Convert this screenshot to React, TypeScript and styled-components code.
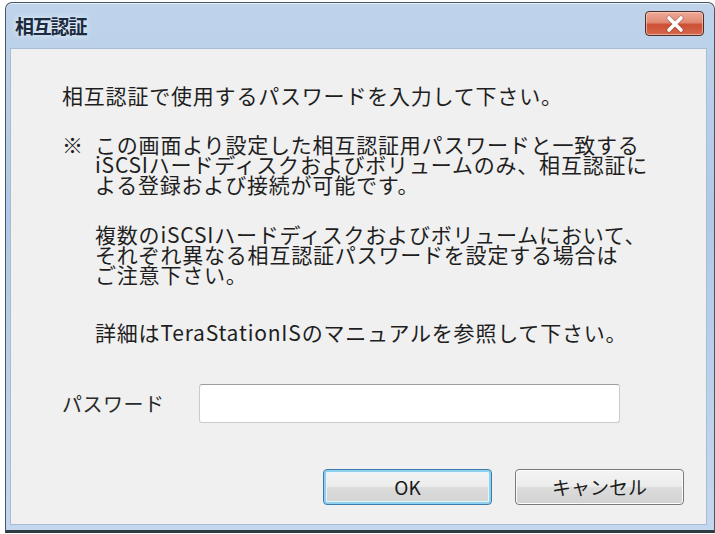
import React from "react";
import styled, { createGlobalStyle } from "styled-components";

const FONT = `"Noto Sans CJK JP", "Noto Sans", sans-serif`;

const GlobalStyle = createGlobalStyle`
  html, body {
    margin: 0;
    padding: 0;
    background: #ffffff;
  }
  * {
    box-sizing: border-box;
  }
`;

const Page = styled.div`
  width: 715px;
  height: 534px;
  padding: 2px 0 1px 5px;
  font-family: ${FONT};
`;

const Window = styled.div`
  width: 710px;
  height: 531px;
  display: flex;
  flex-direction: column;
  border: 1px solid #4a5566;
  border-bottom: 3px solid #2f3b3f;
  border-radius: 7px 7px 0 0;
  background: linear-gradient(180deg, #bfd4eb 0%, #afc9e6 40%, #c3d8ee 100%);
  box-shadow: inset 0 1px 0 rgba(255, 255, 255, 0.7);
`;

const TitleBar = styled.div`
  height: 45px;
  flex: none;
  display: flex;
  align-items: flex-start;
  justify-content: space-between;
  padding: 0 10px 0 9px;
`;

const Title = styled.div`
  margin-top: 11px;
  font-size: 19px;
  line-height: 24px;
  letter-spacing: -1.2px;
  font-weight: 700;
  color: #1c2b40;
  text-shadow: 0 0 6px rgba(255, 255, 255, 0.8);
`;

const CloseButton = styled.div`
  margin-top: 8px;
  width: 59px;
  height: 25px;
  display: flex;
  align-items: center;
  justify-content: center;
  border: 1px solid #4a2f2c;
  border-radius: 4px;
  background: linear-gradient(
    180deg,
    #eeaa98 0%,
    #e08a74 45%,
    #cc4f33 55%,
    #d7694e 100%
  );
  box-shadow: inset 0 0 0 1px rgba(255, 210, 200, 0.6);
`;

const Content = styled.div`
  flex: 1;
  margin: 0 7px 5px 4px;
  background: #f0f0f0;
  border: 1px solid #a9bcd2;
  padding: 36px 0 0 51px;
  color: #1e1e1e;
  font-size: 21px;
  line-height: 20px;
  letter-spacing: 0.8px;
  white-space: nowrap;
  display: flex;
  flex-direction: column;
`;

const Lead = styled.p`
  margin: 0;
`;

const Note = styled.div<{ $gap: number }>`
  display: flex;
  margin-top: ${(p) => p.$gap}px;
`;

const Mark = styled.span`
  width: 33px;
  flex: none;
`;

const NoteText = styled.p`
  margin: 0;
`;

const FormRow = styled.div`
  display: flex;
  align-items: center;
  margin-top: 42px;
`;

const Label = styled.label`
  width: 137px;
  font-size: 20px;
  letter-spacing: 0.5px;
  color: #2a2a2a;
`;

const TextBox = styled.div`
  width: 421px;
  height: 39px;
  background: #ffffff;
  border: 1px solid #c9cccf;
  border-top-color: #9a9ea3;
  border-radius: 3px;
`;

const ButtonRow = styled.div`
  display: flex;
  justify-content: flex-end;
  gap: 23px;
  margin-top: 46px;
  padding-right: 22px;
`;

const Button = styled.div<{ $default?: boolean }>`
  width: 169px;
  height: 36px;
  display: flex;
  align-items: center;
  justify-content: center;
  border-radius: 4px;
  font-size: 19px;
  letter-spacing: 0;
  color: #1a1a1a;
  border: 1px solid ${(p) => (p.$default ? "#3d7bad" : "#7a7a7a")};
  background: linear-gradient(
    180deg,
    #f4f4f4 0%,
    #ececec 48%,
    #dcdcdc 52%,
    #d2d2d2 100%
  );
  box-shadow: ${(p) =>
    p.$default
      ? "inset 0 0 0 2px #8fd0ef, inset 0 0 0 3px #e6f4fb"
      : "inset 0 0 0 1px #fbfbfb"};
`;

export default function App() {
  return (
    <Page>
      <GlobalStyle />
      <Window>
        <TitleBar>
          <Title>相互認証</Title>
          <CloseButton>
            <svg width="22" height="18" viewBox="0 0 22 18">
              <path
                d="M5 3 L17 15 M17 3 L5 15"
                stroke="#5a2a22"
                strokeWidth="5.2"
                strokeLinecap="round"
                opacity="0.3"
              />
              <path
                d="M5 3 L17 15 M17 3 L5 15"
                stroke="#ffffff"
                strokeWidth="3.6"
                strokeLinecap="round"
              />
            </svg>
          </CloseButton>
        </TitleBar>
        <Content>
          <Lead>相互認証で使用するパスワードを入力して下さい。</Lead>
          <Note $gap={29}>
            <Mark>※</Mark>
            <NoteText>
              この画面より設定した相互認証用パスワードと一致する
              <br />
              iSCSIハードディスクおよびボリュームのみ、相互認証に
              <br />
              よる登録および接続が可能です。
            </NoteText>
          </Note>
          <Note $gap={30}>
            <Mark />
            <NoteText>
              複数のiSCSIハードディスクおよびボリュームにおいて、
              <br />
              それぞれ異なる相互認証パスワードを設定する場合は
              <br />
              ご注意下さい。
            </NoteText>
          </Note>
          <Note $gap={38}>
            <Mark />
            <NoteText>詳細はTeraStationISのマニュアルを参照して下さい。</NoteText>
          </Note>
          <FormRow>
            <Label>パスワード</Label>
            <TextBox />
          </FormRow>
          <ButtonRow>
            <Button $default>OK</Button>
            <Button>キャンセル</Button>
          </ButtonRow>
        </Content>
      </Window>
    </Page>
  );
}
